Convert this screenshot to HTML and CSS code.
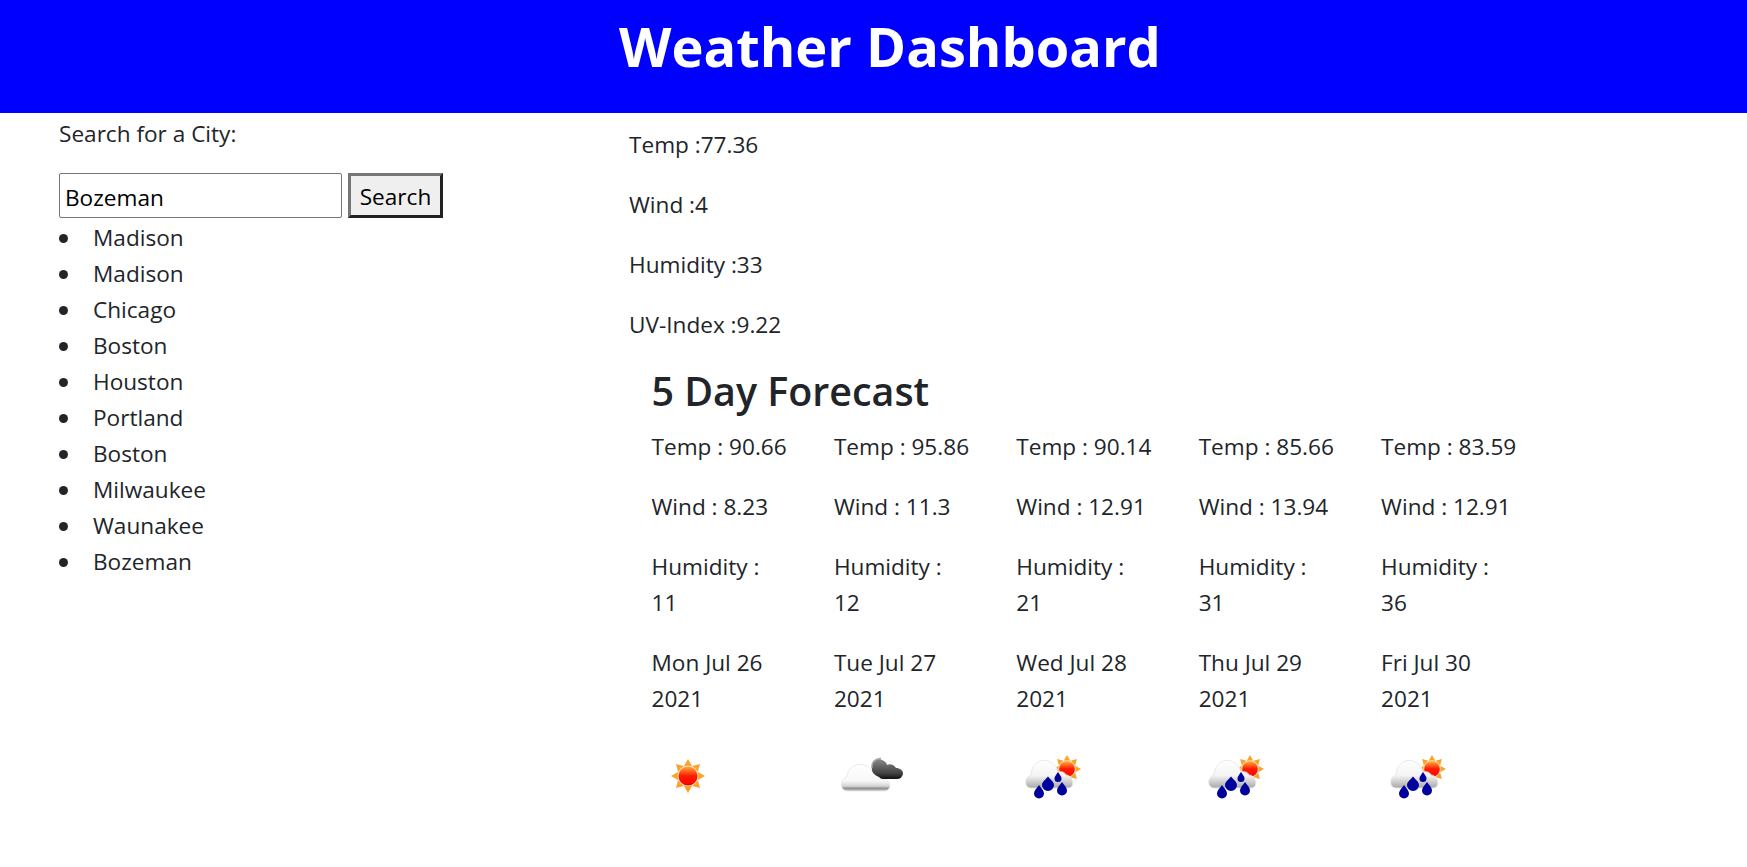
FILE: index.html
```html
<!DOCTYPE html>
<html lang="en">
<head>
<meta charset="utf-8">
<title>Weather Dashboard</title>
<link rel="stylesheet" href="styles.css">
</head>
<body>
<svg class="sprite" width="0" height="0" aria-hidden="true">
  <defs>
    <filter id="soft" x="-10%" y="-10%" width="120%" height="120%"><feGaussianBlur stdDeviation="0.45"/></filter>
    <linearGradient id="core" x1="0" y1="0" x2="0" y2="1"><stop offset="0" stop-color="#fdb03a"/><stop offset=".5" stop-color="#ff1a00"/><stop offset="1" stop-color="#f00"/></linearGradient>
    <linearGradient id="whiteCloud" x1="0" y1="0" x2="0" y2="1"><stop offset="0" stop-color="#fff"/><stop offset=".62" stop-color="#f8f8f8"/><stop offset=".82" stop-color="#d4d4d4"/><stop offset=".9" stop-color="#8e8e8e"/><stop offset="1" stop-color="#c8c8c8"/></linearGradient>
    <linearGradient id="rainCloud" x1="0" y1="0" x2="0" y2="1"><stop offset="0" stop-color="#fff"/><stop offset=".55" stop-color="#f4f4f4"/><stop offset="1" stop-color="#a8a8a8"/></linearGradient>
    <linearGradient id="darkCloud" x1="0" y1="0" x2="0" y2="1"><stop offset="0" stop-color="#8a8a8a"/><stop offset=".7" stop-color="#444"/><stop offset="1" stop-color="#111"/></linearGradient>
    <symbol id="sun-rays" viewBox="-17 -17 34 34">
      <g fill="#f9a32b">
        <path d="M-4 -10 L0 -17 L4 -10Z"/>
        <path d="M-4 -10 L0 -17 L4 -10Z" transform="rotate(45)"/>
        <path d="M-4 -10 L0 -17 L4 -10Z" transform="rotate(90)"/>
        <path d="M-4 -10 L0 -17 L4 -10Z" transform="rotate(135)"/>
        <path d="M-4 -10 L0 -17 L4 -10Z" transform="rotate(180)"/>
        <path d="M-4 -10 L0 -17 L4 -10Z" transform="rotate(225)"/>
        <path d="M-4 -10 L0 -17 L4 -10Z" transform="rotate(270)"/>
        <path d="M-4 -10 L0 -17 L4 -10Z" transform="rotate(315)"/>
      </g>
      <circle r="10.5" fill="#ffd9a8"/>
      <circle r="9.5" fill="url(#core)"/>
    </symbol>
    <symbol id="icon-clear" viewBox="0 0 74 74">
      <g filter="url(#soft)"><use href="#sun-rays" x="19" y="20" width="34" height="34"/></g>
    </symbol>
    <symbol id="icon-clouds" viewBox="0 0 74 74">
      <g filter="url(#soft)" transform="translate(1 0)">
        <path d="M13 52 C4 52 5 40 12 38 C12 30 21 23 29 26 C33 27 36 30 38 34 C42 32 48 35 48 40 C57 41 57 52 49 52Z" fill="url(#whiteCloud)" stroke="#e4e4e4" stroke-width=".8"/>
        <path d="M44 38 C39 36 36 33 37 28 C37 22 43 18 47 21 C50 22 52 24 52 26 C56 24 60 27 61 29 C66 29 70 33 67 37 C66 40 63 40 60 40 L48 40 C46 40 45 39 44 38Z" fill="url(#darkCloud)"/>
        <path d="M37 29 C36 23 41 19 46 19.5" fill="none" stroke="#a8a8a8" stroke-width="1.4"/>
      </g>
    </symbol>
    <symbol id="icon-rain" viewBox="0 0 74 74">
      <g filter="url(#soft)" transform="translate(2 0)">
        <use href="#sun-rays" x="35" y="16" width="28" height="28"/>
        <path d="M13 49 C6 49 6 38 13 36 C13 26 22 19 30 22 C35 24 39 27 40 33 C43 32 47 33 48 36 C55 36 58 49 50 49Z" fill="url(#rainCloud)" stroke="#e4e4e4" stroke-width=".8"/>
        <g fill="#00049c">
          <path d="M21 46 C24 50 26 52 26 54.5 A5 5 0 0 1 16 54.5 C16 52 18 50 21 46Z"/>
          <path d="M30 37.5 C33 41 36 43 36 46 A6 6 0 0 1 24 46 C24 43 27 41 30 37.5Z"/>
          <path d="M44 43 C47 47 49 49 49 51.5 A5 5 0 0 1 39 51.5 C39 49 41 47 44 43Z"/>
          <path d="M40 33 C42 36 43.5 37.5 43.5 39.5 A3.5 3.5 0 0 1 36.5 39.5 C36.5 37.5 38 36 40 33Z"/>
        </g>
      </g>
    </symbol>
  </defs>
</svg>

<header class="banner"><h1 class="title">Weather Dashboard</h1></header>

<main class="layout">
  <section class="sidebar">
    <p class="search-label">Search for a City:</p>
    <form class="search-form">
      <input class="search-input" type="text" value="Bozeman">
      <button class="search-button" type="button">Search</button>
    </form>
    <ul class="history">
      <li>Madison</li>
      <li>Madison</li>
      <li>Chicago</li>
      <li>Boston</li>
      <li>Houston</li>
      <li>Portland</li>
      <li>Boston</li>
      <li>Milwaukee</li>
      <li>Waunakee</li>
      <li>Bozeman</li>
    </ul>
  </section>

  <section class="weather">
    <div class="current">
      <p>Temp :77.36</p>
      <p>Wind :4</p>
      <p>Humidity :33</p>
      <p>UV-Index :9.22</p>
    </div>
    <div class="forecast">
      <h2 class="forecast-title">5 Day Forecast</h2>
      <div class="forecast-grid">
        <article class="day">
          <p>Temp : 90.66</p><p>Wind : 8.23</p><p>Humidity : 11</p><p>Mon Jul 26 2021</p>
          <svg class="icon"><use href="#icon-clear"/></svg>
        </article>
        <article class="day">
          <p>Temp : 95.86</p><p>Wind : 11.3</p><p>Humidity : 12</p><p>Tue Jul 27 2021</p>
          <svg class="icon"><use href="#icon-clouds"/></svg>
        </article>
        <article class="day">
          <p>Temp : 90.14</p><p>Wind : 12.91</p><p>Humidity : 21</p><p>Wed Jul 28 2021</p>
          <svg class="icon"><use href="#icon-rain"/></svg>
        </article>
        <article class="day">
          <p>Temp : 85.66</p><p>Wind : 13.94</p><p>Humidity : 31</p><p>Thu Jul 29 2021</p>
          <svg class="icon"><use href="#icon-rain"/></svg>
        </article>
        <article class="day">
          <p>Temp : 83.59</p><p>Wind : 12.91</p><p>Humidity : 36</p><p>Fri Jul 30 2021</p>
          <svg class="icon"><use href="#icon-rain"/></svg>
        </article>
      </div>
    </div>
  </section>
</main>
</body>
</html>
```

FILE: styles.css
```css
* { box-sizing: border-box; }

html, body { margin: 0; padding: 0; }

body {
  background: #fff;
  color: #212529;
  font-family: "Open Sans", "Noto Sans", sans-serif;
  font-size: 22.6px;
  line-height: 36px;
}

p { margin: 0 0 24px; }

.sprite { position: absolute; }

.banner {
  background: #00f;
  color: #fff;
  height: 113px;
  display: flex;
  justify-content: center;
  padding: 12px 0 0 33px;
}

.title {
  margin: 0;
  font-size: 54.2px;
  font-weight: 700;
  line-height: 68px;
}

.layout {
  display: flex;
  padding-left: 59px;
}

.sidebar { width: 570px; flex: none; }

.search-label { margin: 3px 0 21px; }

.search-form {
  display: flex;
  gap: 6px;
  height: 45px;
}

.search-input {
  width: 283px;
  height: 45px;
  border: 1px solid #767676;
  border-radius: 2px;
  padding: 4px 5px 0;
  font: inherit;
  color: #000;
}

.search-button {
  width: 95px;
  height: 45px;
  padding: 3px 0 0;
  background: #efefef;
  color: #000;
  border: 3px solid;
  border-color: #767676 #222 #222 #767676;
  font: inherit;
}

.history {
  list-style: none;
  margin: 2px 0 0;
  padding: 0;
}

.history li {
  position: relative;
  padding-left: 34px;
}

.history li::before {
  content: "";
  position: absolute;
  left: 0;
  top: 14px;
  width: 9px;
  height: 9px;
  border-radius: 50%;
  background: #212529;
}

.current { padding-top: 14px; }

.forecast { padding-left: 22.5px; margin-top: -3px; }

.forecast-title {
  margin: 0 0 11px;
  font-size: 39.4px;
  font-weight: 600;
  line-height: 54px;
}

.forecast-grid {
  display: grid;
  grid-template-columns: repeat(5, 182.4px);
}

.day { padding-right: 45px; }

.day p:last-of-type { margin-bottom: 22px; }

.icon {
  display: block;
  width: 74px;
  height: 74px;
}
```
